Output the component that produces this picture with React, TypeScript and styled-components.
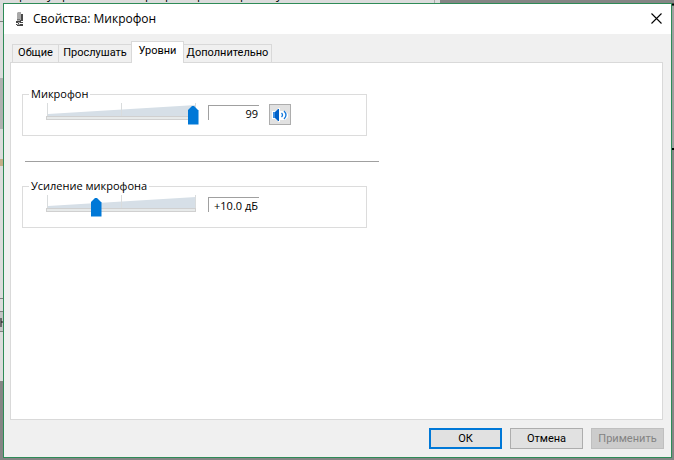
import React, { useState } from "react";
import styled, { createGlobalStyle } from "styled-components";

const GlobalStyle = createGlobalStyle`
  * { box-sizing: border-box; }
  html, body, #root { height: 100%; margin: 0; }
  body { background: #858585; overflow: hidden; }
  body, button, input { font-family: "Open Sans", "Noto Sans", sans-serif; font-size: 11px; color: #000; }
`;

const Desktop = styled.div`
  position: relative;
  height: 100vh;
  padding: 3px 2px 2px 3px;
`;

const Backdrop = styled.svg`
  position: absolute;
  inset: 0;
  width: 100%;
  height: 100%;
`;

const Dialog = styled.section`
  position: relative;
  display: flex;
  flex-direction: column;
  height: 100%;
  border: 1px solid #2e8b57;
  background: #f0f0f0;
`;

const TitleBar = styled.header`
  display: flex;
  align-items: center;
  flex: none;
  height: 30px;
  padding: 0 9px 0 8px;
  background: #fff;
`;

const Title = styled.h1`
  flex: 1;
  margin: 0 0 0 6px;
  font-size: 12px;
  line-height: 16px;
  font-weight: 400;
`;

const CloseButton = styled.button`
  display: flex;
  padding: 0 0 2px;
  border: 0;
  background: none;
`;

const TabList = styled.div`
  display: flex;
  align-items: flex-end;
  flex: none;
  height: 28px;
  padding: 0 8px;
`;

const Tab = styled.button<{ $active?: boolean; $width: number }>`
  position: relative;
  width: ${(p) => p.$width}px;
  height: ${(p) => (p.$active ? 22 : 18)}px;
  padding: 0 0 ${(p) => (p.$active ? 4 : 1)}px;
  margin-bottom: ${(p) => (p.$active ? -1 : 0)}px;
  z-index: ${(p) => (p.$active ? 1 : 0)};
  border: 1px solid #d9d9d9;
  border-bottom: 0;
  border-right-width: ${(p) => (p.$active ? 1 : 0)}px;
  background: ${(p) => (p.$active ? "#fff" : "#f0f0f0")};
  font-family: Roboto, "Open Sans", sans-serif;
  line-height: 16px;
  white-space: nowrap;
  &:last-child { border-right-width: 1px; border-left-width: 0; }
`;

const Pane = styled.main`
  flex: 1;
  min-height: 0;
  margin: 0 8px 0 6px;
  padding: 24px 11px;
  border: 1px solid #d9d9d9;
  background: #fff;
`;

const Group = styled.fieldset`
  display: flex;
  align-items: flex-start;
  width: 100%;
  max-width: 345px;
  height: 49px;
  min-width: 0;
  margin: 0;
  padding: 2px 0 0 23px;
  border: 1px solid #dcdcdc;
`;

const Legend = styled.legend`
  margin-left: -17px;
  padding: 0 2px;
  line-height: 14px;
  height: 14px;
`;

const Rule = styled.hr`
  width: 354px;
  max-width: 100%;
  margin: 25px 0 17px 3px;
  border: 0;
  border-top: 1px solid #a0a0a0;
`;

const SliderBox = styled.div`
  position: relative;
  width: 152px;
  height: 24px;
`;

const Range = styled.input`
  position: absolute;
  top: 0;
  left: -4px;
  width: 158px;
  height: 24px;
  margin: 0;
  appearance: none;
  background: none;
  &::-webkit-slider-thumb {
    appearance: none;
    width: 11px;
    height: 19px;
    background: #0078d7;
    clip-path: polygon(0 5px, 5px 0, 6px 0, 100% 5px, 100% 100%, 0 100%);
  }
`;

const ValueBox = styled.input`
  width: 51px;
  height: 15px;
  margin: 2px 0 0 10px;
  padding: 0 1px 0 0;
  border: solid #a0a0a0;
  border-width: 1px 0 0 1px;
  background: #fff;
  line-height: 14px;
  text-align: right;
`;

const SpeakerButton = styled.button`
  display: flex;
  align-items: center;
  justify-content: center;
  width: 22px;
  height: 21px;
  margin: 1px 0 0 10px;
  padding: 0;
  border: 1px solid #adadad;
  background: #e1e1e1;
`;

const Footer = styled.footer`
  display: flex;
  justify-content: flex-end;
  flex: none;
  gap: 8px;
  padding: 8px 7px;
`;

const PushButton = styled.button<{ $primary?: boolean }>`
  width: 73px;
  height: 21px;
  padding: 0;
  border: ${(p) => (p.$primary ? "2px solid #0078d7" : "1px solid #adadad")};
  background: #e1e1e1;
  font-family: Roboto, "Open Sans", sans-serif;
  line-height: 16px;
  &:disabled { border-color: #bfbfbf; background: #ccc; color: #838383; }
`;

function MicIcon() {
  return (
    <svg width="15" height="16" viewBox="0 0 15 16" aria-hidden="true">
      <path d="M5 2 6 1h3v9H5z" fill="#a9a9a9" />
      <path d="M9 3h2v7H8V9h1z" fill="#4a4a4a" />
      <path d="M5 8h3v1H5z" fill="#777" />
      <path d="M4 10h5v1h2v1H7v1h4v2H5v-1H4v-1h2v-1H4z" fill="#444" />
      <path d="M6 11h2v1H6zM5 13h3v1H5z" fill="#9a9a9a" />
    </svg>
  );
}

function SpeakerIcon() {
  return (
    <svg width="16" height="16" viewBox="0 0 16 16" aria-hidden="true">
      <path d="M0 4h3l4-3h1v3h5l3 3v3l-3 3H8v2H7l-4-3H0z" fill="#fff" />
      <path d="M1 5h2v6H1z" fill="#3b8de0" />
      <path d="M3 5 6 2h1v12H6l-3-3z" fill="#0060c8" />
      <path d="M9.5 6q2 2 0 4M12 4q4 4 0 8" fill="none" stroke="#1679db" strokeWidth="1.3" />
    </svg>
  );
}

function Slider({ label, value, onChange }: {
  label: string; value: number; onChange: (v: number) => void;
}) {
  return (
    <SliderBox>
      <svg width="152" height="24" viewBox="0 0 152 24" aria-hidden="true">
        <path d="M2 11 150 2v11H2z" fill="#d6dfe7" />
        <path d="M1.5 0v13M75.5 0v13M149.5 0v13" stroke="#d9dcdd" />
        <rect x="0.5" y="13.5" width="149" height="3" fill="#e7eaea" stroke="#d0d0d0" />
      </svg>
      <Range aria-label={label} type="range" min="0" max="100" value={value}
        onChange={(e) => onChange(Number(e.target.value))} />
    </SliderBox>
  );
}

export default function App() {
  const [level, setLevel] = useState(99);
  const [boost, setBoost] = useState(33);
  return (
    <>
      <GlobalStyle />
      <Desktop>
        <Backdrop aria-hidden="true">
          <rect width="440" height="381" fill="#dcdcdc" />
          <text x="19 47 62 145 165 197 240 276" y="-1" fontSize="12">руррррру</text>
          <path d="M0 21.5h3M0 298.5h3M0 311.5h3M0 331.5h3" stroke="#808080" />
          <path d="M0 78h3v51H0z" fill="#b0b0b0" />
          <path d="M0 159h3v7H0z" fill="#c4ad88" />
          <path d="M0 312h3v19H0z" fill="#c4c4c4" />
          <path d="M1 318v9M1 322h2" stroke="#111" />
          <path d="M434.5 0v3" stroke="#aaa" />
          <path d="M672 4.5h2M672 149h2" stroke="#000" strokeWidth="2" />
          <path d="M672 6h2v142h-2z" fill="#a0a0a0" />
        </Backdrop>
        <Dialog aria-label="Свойства: Микрофон">
          <TitleBar>
            <MicIcon />
            <Title>Свойства: Микрофон</Title>
            <CloseButton aria-label="Закрыть">
              <svg width="11" height="11" viewBox="0 0 11 11" aria-hidden="true">
                <path d="m.5.5 10 10m0-10-10 10" stroke="#000" strokeWidth="1.1" />
              </svg>
            </CloseButton>
          </TitleBar>
          <TabList role="tablist">
            <Tab role="tab" aria-selected="false" $width={46}>Общие</Tab>
            <Tab role="tab" aria-selected="false" $width={73}>Прослушать</Tab>
            <Tab role="tab" aria-selected="true" $active $width={53}>Уровни</Tab>
            <Tab role="tab" aria-selected="false" $width={88}>Дополнительно</Tab>
          </TabList>
          <Pane role="tabpanel">
            <Group>
              <Legend>Микрофон</Legend>
              <Slider label="Микрофон" value={level} onChange={setLevel} />
              <ValueBox aria-label="Уровень" readOnly value={level} />
              <SpeakerButton aria-label="Звук"><SpeakerIcon /></SpeakerButton>
            </Group>
            <Rule />
            <Group>
              <Legend>Усиление микрофона</Legend>
              <Slider label="Усиление микрофона" value={boost} onChange={setBoost} />
              <ValueBox aria-label="Усиление" readOnly
                value={`+${((boost * 30) / 99).toFixed(1)} дБ`} />
            </Group>
          </Pane>
          <Footer>
            <PushButton $primary>ОК</PushButton>
            <PushButton>Отмена</PushButton>
            <PushButton disabled>Применить</PushButton>
          </Footer>
        </Dialog>
      </Desktop>
    </>
  );
}
